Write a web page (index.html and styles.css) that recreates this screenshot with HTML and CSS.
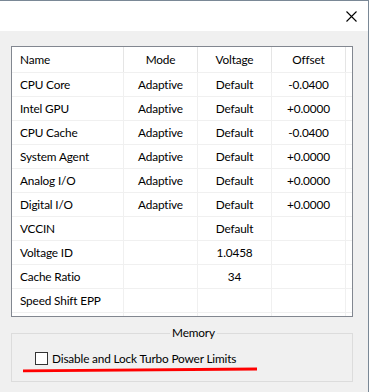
FILE: index.html
```html
<!DOCTYPE html>
<html lang="en">

<head>
	<meta charset="UTF-8">
	<meta name="viewport" content="width=device-width, initial-scale=1.0">
	<title>Voltage</title>
	<link rel="stylesheet" href="styles.css">
</head>

<body>
	<div class="window">
		<div class="titlebar">
			<span class="close">
				<svg width="11" height="11" viewBox="0 0 11 11">
					<path d="M0.5 0.5 L10.5 10.5 M10.5 0.5 L0.5 10.5" stroke="#000" stroke-width="1.1" fill="none" />
				</svg>
			</span>
		</div>
		<div class="content">
			<div class="list">
				<div class="row head">
					<div class="cell left">Name</div>
					<div class="cell">Mode</div>
					<div class="cell">Voltage</div>
					<div class="cell">Offset</div>
					<div class="cell"></div>
				</div>
				<div class="row">
					<div class="cell left">CPU Core</div>
					<div class="cell">Adaptive</div>
					<div class="cell">Default</div>
					<div class="cell">-0.0400</div>
					<div class="cell"></div>
				</div>
				<div class="row">
					<div class="cell left">Intel GPU</div>
					<div class="cell">Adaptive</div>
					<div class="cell">Default</div>
					<div class="cell">+0.0000</div>
					<div class="cell"></div>
				</div>
				<div class="row">
					<div class="cell left">CPU Cache</div>
					<div class="cell">Adaptive</div>
					<div class="cell">Default</div>
					<div class="cell">-0.0400</div>
					<div class="cell"></div>
				</div>
				<div class="row">
					<div class="cell left">System Agent</div>
					<div class="cell">Adaptive</div>
					<div class="cell">Default</div>
					<div class="cell">+0.0000</div>
					<div class="cell"></div>
				</div>
				<div class="row">
					<div class="cell left">Analog I/O</div>
					<div class="cell">Adaptive</div>
					<div class="cell">Default</div>
					<div class="cell">+0.0000</div>
					<div class="cell"></div>
				</div>
				<div class="row">
					<div class="cell left">Digital I/O</div>
					<div class="cell">Adaptive</div>
					<div class="cell">Default</div>
					<div class="cell">+0.0000</div>
					<div class="cell"></div>
				</div>
				<div class="row">
					<div class="cell left">VCCIN</div>
					<div class="cell"></div>
					<div class="cell">Default</div>
					<div class="cell"></div>
					<div class="cell"></div>
				</div>
				<div class="row">
					<div class="cell left">Voltage ID</div>
					<div class="cell"></div>
					<div class="cell">1.0458</div>
					<div class="cell"></div>
					<div class="cell"></div>
				</div>
				<div class="row">
					<div class="cell left">Cache Ratio</div>
					<div class="cell"></div>
					<div class="cell">34</div>
					<div class="cell"></div>
					<div class="cell"></div>
				</div>
				<div class="row">
					<div class="cell left">Speed Shift EPP</div>
					<div class="cell"></div>
					<div class="cell"></div>
					<div class="cell"></div>
					<div class="cell"></div>
				</div>
				<div class="row">
					<div class="cell left"></div>
					<div class="cell"></div>
					<div class="cell"></div>
					<div class="cell"></div>
					<div class="cell"></div>
				</div>
			</div>

			<fieldset class="group">
				<legend>Memory</legend>
				<label class="check">
					<span class="box"></span>
					<span>Disable and Lock Turbo Power Limits</span>
				</label>
			</fieldset>
		</div>

		<svg class="mark" width="369" height="392" viewBox="0 0 369 392">
			<polygon points="23,369.6 257,367.4 257,370.6 23,372.2" fill="#ff0000" />
		</svg>
	</div>
</body>

</html>
```

FILE: styles.css
```css
* {
	padding: 0;
	margin: 0;
	box-sizing: border-box;
}

body {
	font-family: Lato, "Noto Sans", sans-serif;
	font-size: 11.8px;
	letter-spacing: -0.15px;
	color: #000;
	background: #f0f0f0;
}

.window {
	position: relative;
	width: 369px;
	height: 392px;
	border-top: 1px solid #7a8896;
	border-right: 1px solid #7a8896;
	background: #f0f0f0;
}

.titlebar {
	height: 30px;
	background: #fff;
	display: flex;
	justify-content: flex-end;
	align-items: center;
	padding-right: 11px;
}

.close {
	display: flex;
	width: 11px;
	height: 11px;
}

.content {
	padding: 15px 15px 0 11px;
}

.list {
	width: 342px;
	height: 271px;
	border: 1px solid #828790;
	background: #fff;
	overflow: hidden;
}

.row {
	display: grid;
	grid-template-columns: 112px 74px 74px 74px 1fr;
	height: 24px;
	border-top: 1px solid #f0f0f0;
}

.row.head {
	height: 25px;
	border-top: 0;
}

.cell {
	border-right: 1px solid #f0f0f0;
	text-align: center;
	line-height: 23px;
	white-space: nowrap;
	overflow: hidden;
}

.head .cell {
	border-right-color: #e5e5e5;
	line-height: 25px;
	height: 25px;
}

.row .cell:last-child {
	border-right: 0;
}

.cell.left {
	text-align: left;
	padding-left: 8px;
}

.group {
	margin-top: 8px;
	width: 342px;
	height: 57px;
	border: 1px solid #dcdcdc;
	padding: 0 0 0 23px;
}

.group legend {
	margin: 0 auto;
	padding: 0 2px;
	line-height: 16px;
}

.check {
	display: flex;
	align-items: center;
	gap: 4px;
	margin-top: 10px;
}

.check .box {
	width: 13px;
	height: 13px;
	border: 1px solid #333;
	background: #fff;
}

.mark {
	position: absolute;
	left: 0;
	top: -1px;
	pointer-events: none;
}
```
